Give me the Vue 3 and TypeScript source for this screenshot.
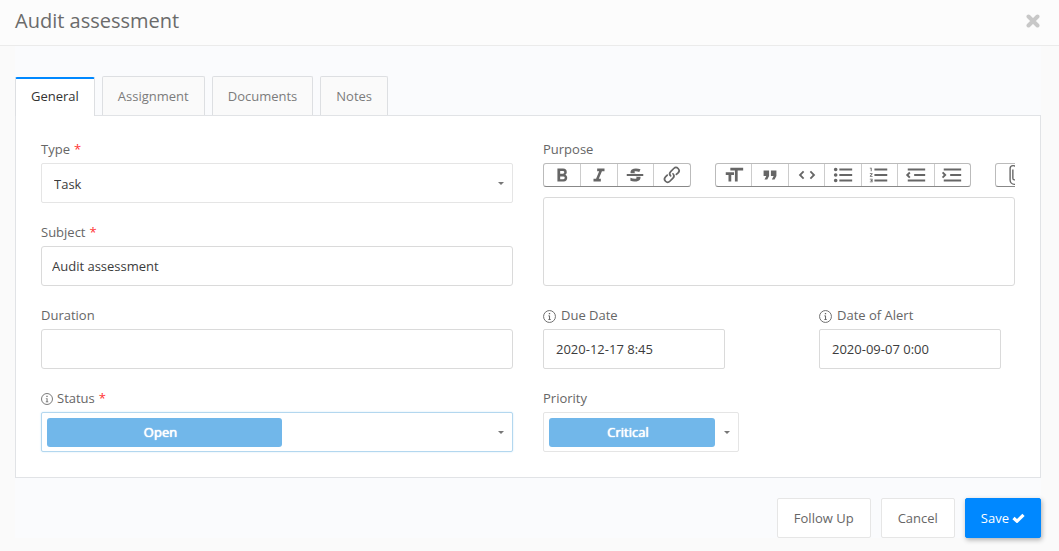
<script setup lang="ts">
import { ref } from 'vue'

interface ToolButton {
  name: string
  path: string
}

const tabs = ['General', 'Assignment', 'Documents', 'Notes']
const activeTab = ref('General')

const type = ref('Task')
const subject = ref('Audit assessment')
const duration = ref('')
const status = ref('Open')
const purpose = ref('')
const dueDate = ref('2020-12-17 8:45')
const alertDate = ref('2020-09-07 0:00')
const priority = ref('Critical')

const textTools: ToolButton[] = [
  { name: 'Bold', path: 'M15.6 11.8c1-.7 1.6-1.8 1.6-2.8a4 4 0 0 0-4-4H7v14h7c2.1 0 3.7-1.7 3.7-3.8 0-1.5-.8-2.8-2.1-3.4zM10 7.5h3a1.5 1.5 0 1 1 0 3h-3v-3zm3.5 9H10v-3h3.5a1.5 1.5 0 1 1 0 3z' },
  { name: 'Italic', path: 'M10 5v3h2.2l-3.4 8H6v3h8v-3h-2.2l3.4-8H18V5h-8z' },
  { name: 'Strikethrough', path: 'M12.73 14l.28.14c.26.15.45.3.57.44.12.14.18.3.18.5 0 .3-.15.56-.44.75-.3.2-.76.3-1.39.3A13.52 13.52 0 0 1 7 14.95v3.37a10.64 10.64 0 0 0 4.84.88c1.26 0 2.35-.19 3.28-.56.93-.37 1.64-.9 2.14-1.57s.74-1.45.74-2.32c0-.26-.02-.51-.06-.75h-5.21zm-5.5-4c-.08-.34-.12-.7-.12-1.1 0-1.29.52-2.3 1.58-3.02 1.05-.72 2.5-1.08 4.34-1.08 1.62 0 3.28.34 4.97 1l-1.3 2.93c-1.47-.6-2.73-.9-3.8-.9-.55 0-.96.08-1.2.26-.26.17-.38.38-.38.64 0 .27.16.52.48.74.17.12.53.3 1.05.53H7.23zM3 13h18v-2H3v2z' },
  { name: 'Link', path: 'M9.88 13.7a4.3 4.3 0 0 1 0-6.07l3.37-3.37a4.26 4.26 0 0 1 6.07 0 4.3 4.3 0 0 1 0 6.06l-1.96 1.72a.91.91 0 1 1-1.3-1.3l1.97-1.71a2.46 2.46 0 0 0-3.48-3.48l-3.38 3.37a2.46 2.46 0 0 0 0 3.48.91.91 0 1 1-1.3 1.3zM4.25 19.46a4.3 4.3 0 0 1 0-6.07l1.93-1.9a.91.91 0 1 1 1.3 1.3l-1.93 1.9a2.46 2.46 0 0 0 3.48 3.48l3.37-3.38c.96-.96.96-2.52 0-3.48a.91.91 0 1 1 1.3-1.3 4.3 4.3 0 0 1 0 6.07l-3.38 3.38a4.26 4.26 0 0 1-6.07 0z' },
]

const blockTools: ToolButton[] = [
  { name: 'Heading', path: 'M12 9v3H9v7H6v-7H3V9h9zM8 4h14v3h-6v12h-3V7H8V4z' },
  { name: 'Quote', path: 'M6 17h3l2-4V7H5v6h3zm8 0h3l2-4V7h-6v6h3z' },
  { name: 'Code', path: 'M18.2 12L15 15.2l1.4 1.4L21 12l-4.6-4.6L15 8.8l3.2 3.2zM5.8 12L9 8.8 7.6 7.4 3 12l4.6 4.6L9 15.2 5.8 12z' },
  { name: 'Bullets', path: 'M4 4a2 2 0 1 0 0 4 2 2 0 0 0 0-4zm0 6a2 2 0 1 0 0 4 2 2 0 0 0 0-4zm0 6a2 2 0 1 0 0 4 2 2 0 0 0 0-4zm4 3h14v-2H8v2zm0-6h14v-2H8v2zm0-8v2h14V5H8z' },
  { name: 'Numbers', path: 'M2 17h2v.5H3v1h1v.5H2v1h3v-4H2v1zm1-9h1V4H2v1h1v3zm-1 3h1.8L2 13.1v.9h3v-1H3.2L5 10.9V10H2v1zm5-6v2h14V5H7zm0 14h14v-2H7v2zm0-6h14v-2H7v2z' },
  { name: 'Decrease level', path: 'M3 19h19v-2H3v2zm7-6h12v-2H10v2zm-8.3-.3l2.8 2.9L6 14.2 4 12l2-2-1.4-1.5L1 12l.7.7zM3 5v2h19V5H3z' },
  { name: 'Increase level', path: 'M3 19h19v-2H3v2zm7-6h12v-2H10v2zm-6.9-1L1 14.2l1.4 1.4L6 12l-.7-.7-2.8-2.8L1 9.9 3.1 12zM3 5v2h19V5H3z' },
]

const fileTools: ToolButton[] = [
  { name: 'Attach files', path: 'M16.5 6v11.5a4 4 0 1 1-8 0V5a2.5 2.5 0 0 1 5 0v10.5a1 1 0 1 1-2 0V6H10v9.5a2.5 2.5 0 0 0 5 0V5a4 4 0 1 0-8 0v12.5a5.5 5.5 0 0 0 11 0V6h-1.5z' },
]

const toolGroups = [
  { kind: 'text', tools: textTools },
  { kind: 'block', tools: blockTools },
  { kind: 'file', tools: fileTools },
]
</script>

<template>
  <div class="dialog" role="dialog" aria-labelledby="dialog-title">
    <header class="head">
      <h1 id="dialog-title">Audit assessment</h1>
      <button class="close" type="button" aria-label="Close">
        <svg viewBox="0 0 14 14" width="14" height="14"><path d="M2.5 2.5l9 9M11.5 2.5l-9 9" stroke="currentColor" stroke-width="4" stroke-linecap="round" /></svg>
      </button>
    </header>

    <form class="body" @submit.prevent>
      <div class="tabs" role="tablist">
        <button
          v-for="tab in tabs"
          :key="tab"
          type="button"
          role="tab"
          class="tab"
          :class="{ active: tab === activeTab }"
          :aria-selected="tab === activeTab"
          @click="activeTab = tab"
        >{{ tab }}</button>
      </div>

      <div class="panel">
        <div class="column">
          <div class="field">
            <label for="type">Type <span class="req">*</span></label>
            <div class="picker">
              <select id="type" v-model="type" class="plain"><option>Task</option></select>
              <svg class="caret" viewBox="0 0 6 3" width="6" height="3"><path d="M0 0h6L3 3z" fill="currentColor" /></svg>
            </div>
          </div>
          <div class="field">
            <label for="subject">Subject <span class="req">*</span></label>
            <input id="subject" v-model="subject" class="box" type="text" />
          </div>
          <div class="field">
            <label for="duration">Duration</label>
            <input id="duration" v-model="duration" class="box" type="text" />
          </div>
          <div class="field">
            <label for="status">
              <svg class="info" viewBox="0 0 14 14" width="12" height="12"><circle cx="7" cy="7" r="6.4" fill="none" stroke="currentColor" /><path d="M6.3 3.3h1.4v1.4H6.3zM5.6 6h2v4h.9v.8H5.6V10h.9V6.8h-.9z" fill="currentColor" /></svg>
              Status <span class="req">*</span>
            </label>
            <div class="picker focused">
              <select id="status" v-model="status" class="pill half"><option>Open</option></select>
              <svg class="caret" viewBox="0 0 6 3" width="6" height="3"><path d="M0 0h6L3 3z" fill="currentColor" /></svg>
            </div>
          </div>
        </div>

        <div class="column">
          <div class="field">
            <label for="purpose">Purpose</label>
            <div class="toolbar">
              <div v-for="group in toolGroups" :key="group.kind" class="group" :class="group.kind">
                <button v-for="tool in group.tools" :key="tool.name" type="button" :aria-label="tool.name">
                  <svg viewBox="0 0 24 24" width="22" height="22"><path :d="tool.path" fill="currentColor" /></svg>
                </button>
              </div>
            </div>
            <textarea id="purpose" v-model="purpose"></textarea>
          </div>
          <div class="pair">
            <div class="field">
              <label for="due" class="wide">
                <svg class="info" viewBox="0 0 14 14" width="13" height="13"><circle cx="7" cy="7" r="6.4" fill="none" stroke="currentColor" /><path d="M6.3 3.3h1.4v1.4H6.3zM5.6 6h2v4h.9v.8H5.6V10h.9V6.8h-.9z" fill="currentColor" /></svg>
                Due Date
              </label>
              <input id="due" v-model="dueDate" class="box date" type="text" />
            </div>
            <div class="field">
              <label for="alert" class="wide">
                <svg class="info" viewBox="0 0 14 14" width="13" height="13"><circle cx="7" cy="7" r="6.4" fill="none" stroke="currentColor" /><path d="M6.3 3.3h1.4v1.4H6.3zM5.6 6h2v4h.9v.8H5.6V10h.9V6.8h-.9z" fill="currentColor" /></svg>
                Date of Alert
              </label>
              <input id="alert" v-model="alertDate" class="box date" type="text" />
            </div>
          </div>
          <div class="pair">
            <div class="field">
              <label for="priority">Priority</label>
              <div class="picker">
                <select id="priority" v-model="priority" class="pill"><option>Critical</option></select>
                <svg class="caret" viewBox="0 0 6 3" width="6" height="3"><path d="M0 0h6L3 3z" fill="currentColor" /></svg>
              </div>
            </div>
          </div>
        </div>
      </div>

      <footer class="actions">
        <button type="button" class="btn">Follow Up</button>
        <button type="button" class="btn">Cancel</button>
        <button type="submit" class="btn save">
          Save
          <svg viewBox="0 0 13 10" width="13" height="10"><path d="M1.5 5l3.5 3.2L11.5 1.8" fill="none" stroke="currentColor" stroke-width="3.2" /></svg>
        </button>
      </footer>
    </form>
  </div>
</template>

<style>
body {
  background: #fafafa;
}
</style>

<style scoped>
.dialog,
.dialog * {
  box-sizing: border-box;
}
.dialog {
  font: 13px/18px 'Open Sans', sans-serif;
  color: #666;
  padding-bottom: 13px;
}
button,
input,
select,
textarea {
  font: inherit;
  color: inherit;
  margin: 0;
  outline: none;
}
button {
  cursor: pointer;
}
svg {
  display: block;
  flex: none;
}
.head {
  display: flex;
  justify-content: space-between;
  align-items: center;
  height: 46px;
  padding: 0 19px 4px 15px;
  border-bottom: 1px solid #ebebeb;
  background: #fcfcfc;
}
h1 {
  margin: 0;
  font-size: 20px;
  line-height: 28px;
  font-weight: 400;
  color: #6b6b6b;
}
.close {
  border: 0;
  padding: 0;
  background: none;
  color: #c8c8c8;
}
.body {
  margin: 0 18px 0 15px;
  padding-top: 30px;
  background: #fafbfd;
}
.tabs {
  display: flex;
  gap: 7px;
}
.tab {
  height: 39px;
  padding: 0 15px;
  border: 1px solid #dddfe2;
  border-bottom: 0;
  border-radius: 2px 2px 0 0;
  background: #fafafa;
  color: #7c7c7c;
}
.tab.active {
  margin: 1px 0 -1px;
  padding-bottom: 4px;
  border-top: 2px solid #0088ff;
  background: #fff;
  color: #333;
  z-index: 1;
}
.panel {
  display: grid;
  grid-template-columns: 1fr 1fr;
  gap: 30px;
  padding: 25px;
  border: 1px solid #e1e3e6;
  background: #fff;
}
.column {
  display: flex;
  flex-direction: column;
  gap: 21px;
  min-width: 0;
}
.field {
  display: flex;
  flex-direction: column;
  gap: 6px;
  min-width: 0;
}
label {
  display: flex;
  align-items: center;
  gap: 4px;
  height: 16px;
}
label.wide {
  gap: 5px;
}
.info {
  margin-top: 2px;
}
.req {
  color: #f33;
}
.box,
.picker,
textarea {
  width: 100%;
  border: 1px solid #dadada;
  border-radius: 3px;
  background: #fff;
  color: #3c3c3c;
}
.box {
  height: 40px;
  padding: 0 10px;
}
.box.date {
  width: 182px;
  padding: 0 12px;
  border-radius: 2px;
}
.picker {
  display: flex;
  align-items: center;
  height: 40px;
  padding: 5px 8px 5px 5px;
  border-color: #e5e5e5;
  border-radius: 2px;
}
.picker.focused {
  border-color: #b3d7ef;
  box-shadow: 0 0 2px #cfe8f8;
}
select {
  appearance: none;
  border: 0;
  flex: 1;
  min-width: 0;
  height: 29px;
  padding: 0;
}
.plain {
  padding: 2px 7px 0;
  background: none;
}
.pill {
  margin-right: 9px;
  padding-right: 8px;
  border-radius: 3px;
  background: #71b7ea;
  color: #fff;
  text-align: center;
  text-align-last: center;
  text-shadow: 0 0 1px #fff, 0 0 1px #fff;
}
.pill.half {
  flex-basis: 235px;
  flex-grow: 0;
  margin-right: 0;
}
.caret {
  margin-left: auto;
  color: #777;
}
.toolbar {
  display: flex;
  gap: 24px;
  overflow: hidden;
  margin-bottom: 4px;
}
.group {
  display: flex;
  flex: none;
  height: 24px;
  border: 1px solid #bbb;
  border-bottom-color: #888;
  border-radius: 3px;
}
.group.text {
  width: 148px;
}
.group.block {
  width: 256px;
}
.group.file {
  width: 38px;
}
.group button {
  display: flex;
  flex: 1;
  align-items: center;
  justify-content: center;
  min-width: 0;
  padding: 0;
  border: 0;
  background: none;
  color: #666;
}
.group button + button {
  border-left: 1px solid #ccc;
}
textarea {
  display: block;
  height: 89px;
  padding: 8px 10px;
  resize: none;
}
.pair {
  display: grid;
  grid-template-columns: 1fr 1fr;
  gap: 80px;
}
.actions {
  display: flex;
  justify-content: flex-end;
  gap: 10px;
  padding-top: 20px;
}
.btn {
  display: flex;
  align-items: center;
  gap: 3px;
  height: 40px;
  padding: 0 16px;
  border: 1px solid #e6e6e6;
  border-radius: 2px;
  background: #fff;
}
.btn.save {
  padding: 0 15px;
  border-color: #0088ff;
  background: #0088ff;
  color: #fff;
  box-shadow: 1px 2px 5px rgba(0, 0, 0, 0.3);
}
</style>
